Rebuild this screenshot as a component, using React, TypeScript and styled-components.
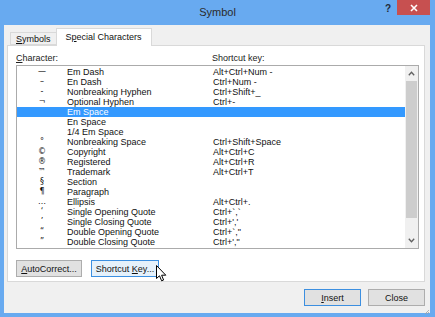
import styled, { createGlobalStyle } from 'styled-components'

const GlobalStyle = createGlobalStyle`
    html, body {
        margin: 0;
        padding: 0;
        background: #68aaf0;
    }
    body {
        font-family: 'Liberation Sans', Arial, sans-serif;
        font-size: 9px;
        color: #000;
    }
`

const Window = styled.div`
    width: 435px;
    height: 317px;
    background: #68aaf0;
    display: flex;
    flex-direction: column;
    overflow: hidden;
`

const TitleBar = styled.div`
    height: 25px;
    display: grid;
    grid-template-columns: 1fr auto 1fr;
    align-items: start;
`

const Title = styled.div`
    grid-column: 2;
    font-size: 11px;
    line-height: 25px;
    color: #2b2b2b;
`

const TitleControls = styled.div`
    grid-column: 3;
    display: flex;
    justify-content: flex-end;
    align-items: flex-start;
    padding-right: 5px;
`

const HelpButton = styled.div`
    width: 12px;
    margin-right: 3px;
    font-size: 10px;
    font-weight: bold;
    line-height: 15px;
    padding-top: 1px;
    text-align: center;
    color: #1e2a3a;
`

const CloseButton = styled.div`
    width: 33px;
    height: 15px;
    background: #c75050;
    display: flex;
    align-items: center;
    justify-content: center;
`

const Body = styled.div`
    height: 288px;
    margin: 0 5px 4px 4px;
    background: #f0f0f0;
    display: flex;
    flex-direction: column;
    padding: 3px 5px 0 3px;
    box-sizing: border-box;
    position: relative;
`

const TabStrip = styled.div`
    display: flex;
    align-items: flex-end;
    padding-left: 3px;
    height: 17px;
    position: relative;
    z-index: 1;
`

const Tab = styled.div<{ $active?: boolean }>`
    box-sizing: border-box;
    height: ${p => (p.$active ? '18px' : '13px')};
    margin-bottom: ${p => (p.$active ? '-1px' : '0')};
    padding: ${p => (p.$active ? '0 9px' : '0 5px')};
    line-height: ${p => (p.$active ? '16px' : '12px')};
    background: ${p => (p.$active ? '#fff' : '#f0f0f0')};
    border: 1px solid #d9d9d9;
    border-bottom: ${p => (p.$active ? 'none' : '1px solid #d9d9d9')};
    ${p => (p.$active ? '' : 'border-right: none;')}
    color: #111;
`

const Panel = styled.div`
    height: 237px;
    background: #fff;
    border: 1px solid #d9d9d9;
    box-sizing: border-box;
    padding: 7px 5px 0 8px;
    display: flex;
    flex-direction: column;
`

const HeaderRow = styled.div`
    display: grid;
    grid-template-columns: 196px 1fr;
    height: 12px;
    line-height: 10px;
    color: #222;
`

const ListBox = styled.div`
    height: 184px;
    border: 1px solid #ababab;
    box-sizing: border-box;
    display: flex;
`

const ListRows = styled.div`
    flex: 1;
    padding-top: 1px;
`

const Row = styled.div<{ $selected?: boolean }>`
    display: grid;
    grid-template-columns: 50px 146px 1fr;
    height: 10px;
    line-height: 10px;
    box-sizing: border-box;
    background: ${p => (p.$selected ? '#3399ff' : 'transparent')};
    color: ${p => (p.$selected ? '#fff' : '#111')};
    white-space: nowrap;
`

const CharCell = styled.span`
    text-align: center;
    font-family: 'DejaVu Sans', sans-serif;
    font-size: 8px;
`

const NameCell = styled.span``

const KeyCell = styled.span``

const ScrollBar = styled.div`
    width: 13px;
    background: #f0f0f0;
    display: flex;
    flex-direction: column;
    align-items: center;
`

const ScrollArrow = styled.div`
    height: 15px;
    width: 100%;
    display: flex;
    align-items: center;
    justify-content: center;
`

const ScrollThumb = styled.div`
    width: 11px;
    height: 137px;
    background: #cdcdcd;
`

const ScrollTrack = styled.div`
    flex: 1;
`

const ButtonRow = styled.div`
    display: flex;
    gap: 9px;
    margin-top: 11px;
    position: relative;
`

const Button = styled.div<{ $width: number; $state?: 'hover' | 'default' }>`
    width: ${p => p.$width}px;
    height: 17px;
    box-sizing: border-box;
    display: flex;
    align-items: center;
    justify-content: center;
    background: ${p => (p.$state === 'hover' ? '#e5f1fb' : '#e1e1e1')};
    border: 1px solid ${p => (p.$state ? '#3c8fe0' : '#adadad')};
    color: #111;
    white-space: pre;
`

const CursorWrap = styled.div`
    position: absolute;
    left: 140px;
    top: 5px;
    width: 11px;
    height: 17px;
`

const Footer = styled.div`
    display: flex;
    justify-content: flex-end;
    gap: 7px;
    margin-top: 7px;
`

const Grip = styled.div`
    position: absolute;
    right: 0;
    bottom: 0;
    width: 6px;
    height: 6px;
`

const U = styled.span`
    text-decoration: underline;
`

type Item = { ch: string; name: string; key: string }

const items: Item[] = [
    { ch: '—', name: 'Em Dash', key: 'Alt+Ctrl+Num -' },
    { ch: '–', name: 'En Dash', key: 'Ctrl+Num -' },
    { ch: '-', name: 'Nonbreaking Hyphen', key: 'Ctrl+Shift+_' },
    { ch: '¬', name: 'Optional Hyphen', key: 'Ctrl+-' },
    { ch: '', name: 'Em Space', key: '' },
    { ch: '', name: 'En Space', key: '' },
    { ch: '', name: '1/4 Em Space', key: '' },
    { ch: '°', name: 'Nonbreaking Space', key: 'Ctrl+Shift+Space' },
    { ch: '©', name: 'Copyright', key: 'Alt+Ctrl+C' },
    { ch: '®', name: 'Registered', key: 'Alt+Ctrl+R' },
    { ch: '™', name: 'Trademark', key: 'Alt+Ctrl+T' },
    { ch: '§', name: 'Section', key: '' },
    { ch: '¶', name: 'Paragraph', key: '' },
    { ch: '…', name: 'Ellipsis', key: 'Alt+Ctrl+.' },
    { ch: '‘', name: 'Single Opening Quote', key: 'Ctrl+`,`' },
    { ch: '’', name: 'Single Closing Quote', key: "Ctrl+','" },
    { ch: '“', name: 'Double Opening Quote', key: 'Ctrl+`,"' },
    { ch: '”', name: 'Double Closing Quote', key: "Ctrl+',\"" },
]

const Chevron = ({ up }: { up?: boolean }) => (
    <svg width="7" height="5" viewBox="0 0 7 5">
        <polyline
            points={up ? '0.8,4.2 3.5,1.2 6.2,4.2' : '0.8,0.8 3.5,3.8 6.2,0.8'}
            fill="none"
            stroke="#606060"
            strokeWidth="1.3"
        />
    </svg>
)

const Pointer = () => (
    <svg width="11" height="17" viewBox="0 0 11 17">
        <path
            d="M0.5 0.5 L0.5 13.5 L3.5 10.8 L5.6 15.8 L7.6 15 L5.6 10.2 L9.8 10.2 Z"
            fill="#fff"
            stroke="#000"
            strokeWidth="1"
            strokeLinejoin="round"
        />
    </svg>
)

export default function App() {
    const selected = 4
    return (
        <>
            <GlobalStyle />
            <Window>
                <TitleBar>
                    <Title>Symbol</Title>
                    <TitleControls>
                        <HelpButton>?</HelpButton>
                        <CloseButton>
                            <svg width="8" height="8" viewBox="0 0 8 8">
                                <path d="M1 1 L7 7 M7 1 L1 7" stroke="#fff" strokeWidth="1.6" />
                            </svg>
                        </CloseButton>
                    </TitleControls>
                </TitleBar>
                <Body>
                    <TabStrip>
                        <Tab><U>S</U>ymbols</Tab>
                        <Tab $active>S<U>p</U>ecial Characters</Tab>
                    </TabStrip>
                    <Panel>
                        <HeaderRow>
                            <span><U>C</U>haracter:</span>
                            <span>Shortcut key:</span>
                        </HeaderRow>
                        <ListBox>
                            <ListRows>
                                {items.map((it, i) => (
                                    <Row key={it.name} $selected={i === selected}>
                                        <CharCell>{it.ch}</CharCell>
                                        <NameCell>{it.name}</NameCell>
                                        <KeyCell>{it.key}</KeyCell>
                                    </Row>
                                ))}
                            </ListRows>
                            <ScrollBar>
                                <ScrollArrow><Chevron up /></ScrollArrow>
                                <ScrollThumb />
                                <ScrollTrack />
                                <ScrollArrow><Chevron /></ScrollArrow>
                            </ScrollBar>
                        </ListBox>
                        <ButtonRow>
                            <Button $width={66}><span><U>A</U>utoCorrect...</span></Button>
                            <Button $width={68} $state="hover"><span>Shortcut <U>K</U>ey...</span></Button>
                            <CursorWrap><Pointer /></CursorWrap>
                        </ButtonRow>
                    </Panel>
                    <Footer>
                        <Button $width={57} $state="default"><span><U>I</U>nsert</span></Button>
                        <Button $width={57}>Close</Button>
                    </Footer>
                    <Grip>
                        <svg width="6" height="6" viewBox="0 0 6 6">
                            <path d="M5 1 L1 5 M5 3 L3 5" stroke="#a0a0a0" strokeWidth="0.8" />
                        </svg>
                    </Grip>
                </Body>
            </Window>
        </>
    )
}
